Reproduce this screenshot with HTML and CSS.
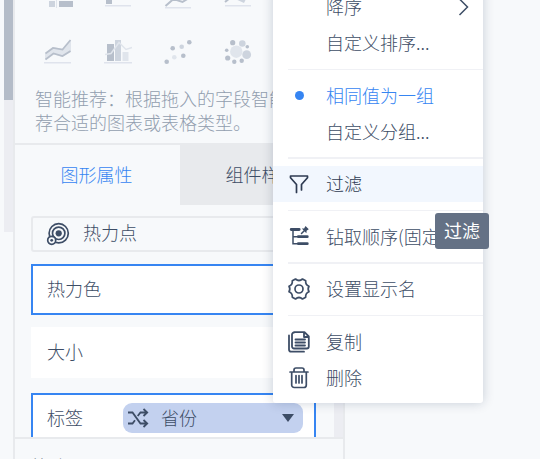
FILE: index.html
```html
<!DOCTYPE html>
<html lang="zh-CN">
<head>
    <meta charset="UTF-8">
    <title>图形属性</title>
    <meta name="viewport" content="width=device-width">
    <link rel="stylesheet" href="styles.css">
</head>
<body>
    <div class="page">
        <div class="side-scroll"><div class="side-thumb"></div></div>
        <div class="panel">
            <div class="charts">
                <div class="chart-grid">
                    <svg viewBox="0 0 30 30"><path fill="#cdd4de" d="M5 18h6v6H5z"/><path fill="#b7bfcb" d="M15 18h14v6H15z"/><path stroke="#e0e5ec" d="M12.500 8v17"/></svg>
                    <svg viewBox="0 0 30 30"><path fill="#b7bfcb" d="M2 12h6v9H2z"/><path fill="#dfe3ec" d="M1 22h26v1.500H1z"/></svg>
                    <svg viewBox="0 0 30 30"><path fill="none" stroke="#b7bfcb" stroke-width="2" d="M1.500 23l8-7 9 3 8-5"/><path fill="#dfe3ec" d="M1 24h26v1.500H1z"/></svg>
                    <svg viewBox="0 0 30 30"><path fill="#cdd4de" d="M9 15l11 5 2-4z"/><path fill="none" stroke="#b7bfcb" stroke-width="2" d="M1 19l5-4"/><path fill="#dfe3ec" d="M1 22h26v1.500H1z"/></svg>
                    <svg viewBox="0 0 30 30"><path fill="#e0e5ec" d="M1 18l8-6 10 2 8-9v12l-9 5-9-3-8 6z"/><path fill="none" stroke="#b7bfcb" stroke-width="1.700" d="M1.500 18.500L9 13l9.500 1.500L26.500 5M1.500 24.500l8-6 9 2.500 8-5"/><path fill="#dfe3ec" d="M0 27h27v1.500H0z"/></svg>
                    <svg viewBox="0 0 30 30"><path fill="#b7bfcb" d="M3 9h7v17H3z"/><path fill="#cdd4de" d="M11 5h6v21h-6z"/><path fill="#e0e5ec" d="M18.500 17h6v9h-6z"/><path fill="none" stroke="#e0e5ec" stroke-width="1.500" d="M1 19.500l6-1 8-11 7 7 6-2"/><path fill="#dfe3ec" d="M0 27h28v1.500H0z"/></svg>
                    <svg viewBox="0 0 30 30"><g fill="#b7bfcb"><circle cx="2.700" cy="26.700" r="2.300"/><circle cx="8.700" cy="13.300" r="2.300"/><circle cx="19.300" cy="20.700" r="2.300"/><circle cx="25.300" cy="7.300" r="2.300"/></g><circle fill="#cdd4de" cx="17.700" cy="11.700" r="2.300"/><circle fill="#e0e5ec" cx="10.300" cy="22.300" r="2.300"/></svg>
                    <svg viewBox="0 0 30 30"><g fill="#b7bfcb"><circle cx="8.700" cy="7.700" r="2.600"/><circle cx="23.300" cy="11.700" r="1.800"/><circle cx="2.700" cy="15.300" r="1.800"/><circle cx="3.700" cy="23" r="2.600"/><circle cx="10.300" cy="26.700" r="2.200"/><circle cx="17.700" cy="25.700" r="2.200"/></g><g fill="#cdd4de"><circle cx="18.300" cy="8.500" r="3.300"/><circle cx="22.700" cy="19.700" r="4.400"/></g><circle fill="#e0e5ec" cx="12.300" cy="16.700" r="6.200"/></svg>
                </div>
                <p class="tip">智能推荐：根据拖入的字段智能推荐合适的图表或表格类型。</p>
            </div>
            <div class="tabs">
                <div class="tab active">图形属性</div>
                <div class="tab">组件样式</div>
            </div>
            <div class="attrs">
                <div class="attr-list">
                    <div class="chart-type">
                        <svg width="24" height="24" viewBox="0 0 24 24" fill="none" stroke="#3d4d66"><circle cx="12.700" cy="11.300" r="9.600" stroke-width="1.700"/><circle cx="12.700" cy="11.300" r="6.200" stroke-width="1.700"/><circle cx="12.700" cy="11.300" r="3.100" fill="#3d4d66" stroke="none"/><circle cx="5.700" cy="18.300" r="4" fill="#f7f9fb" stroke-width="1.700"/><circle cx="5.700" cy="18.300" r="1.400" fill="#3d4d66" stroke="none"/></svg>
                        <span>热力点</span>
                    </div>
                    <div class="attr selected">热力色</div>
                    <div class="attr">大小</div>
                    <div class="attr selected label-attr">
                        <span class="label">标签</span>
                        <div class="field">
                            <svg width="22" height="20" viewBox="0 0 22 20" fill="none" stroke="#3d4d66" stroke-width="1.800"><path d="M1 4.500h4.500l8 11H20M1 15.500h4.500l2.500-3.300M10.700 8l2.800-3.500H20M16.500 1l3.700 3.500L16.500 8M16.500 12l3.700 3.500-3.700 3.500"/></svg>
                            <span>省份</span>
                            <i class="arrow"></i>
                        </div>
                    </div>
                </div>
                <div class="attr-scroll"></div>
            </div>
            <div class="filter">筛选器</div>
        </div>

        <div class="menu">
            <div class="item"><span class="icon"></span><span>降序</span>
                <svg class="more" width="12" height="18" viewBox="0 0 12 18" fill="none" stroke="#3d4d66" stroke-width="1.500"><path d="M1.500 1l8 8-8 8"/></svg>
            </div>
            <div class="item"><span class="icon"></span><span>自定义排序...</span></div>
            <div class="line"></div>
            <div class="item on"><span class="icon"><i class="dot"></i></span><span>相同值为一组</span></div>
            <div class="item"><span class="icon"></span><span>自定义分组...</span></div>
            <div class="line"></div>
            <div class="item hover"><span class="icon">
                <svg width="24" height="24" viewBox="0 0 24 24" fill="none" stroke="#2f3b52" stroke-width="1.700" stroke-linecap="round" stroke-linejoin="round"><path d="M9.500 20.500v-8L3.500 5.700V4h17v1.700l-6 6.800v5.500"/></svg>
            </span><span>过滤</span></div>
            <div class="line"></div>
            <div class="item"><span class="icon">
                <svg width="24" height="24" viewBox="0 0 24 24" fill="none" stroke="#3d4d66" stroke-linecap="round"><path stroke-width="2.800" d="M4.200 4.500h8M11.300 11.700h9M11.300 18.700h9"/><path stroke-width="1.500" d="M6 5v13.700h4M6 11.700h4M14.500 8.500l3-3"/><path fill="#3d4d66" stroke="none" d="M18.500 1l3.300 3.300-1.200.7-1 .8-.2 2.400-4.600-4.600 2.300-.2z"/></svg>
            </span><span>钻取顺序(固定)</span></div>
            <div class="line"></div>
            <div class="item"><span class="icon">
                <svg width="24" height="24" viewBox="0 0 24 24" fill="none" stroke="#3d4d66" stroke-width="1.700" stroke-linejoin="round"><path d="M8.500 2Q12 5 15.500 2L18.700 3.800Q18.300 7.800 22 9.200Q20.300 12 22 14.800Q18.300 16.200 18.700 20.200L15.500 22Q12 19 8.500 22L5.300 20.200Q5.700 16.200 2 14.800Q3.700 12 2 9.200Q5.700 7.800 5.300 3.800Z"/><circle cx="12" cy="12" r="4"/></svg>
            </span><span>设置显示名</span></div>
            <div class="line"></div>
            <div class="item"><span class="icon">
                <svg width="24" height="24" viewBox="0 0 24 24" fill="none" stroke="#3d4d66" stroke-width="1.800" stroke-linecap="round" stroke-linejoin="round"><path d="M7 2.200h10.500l4.300 4.300v10a2 2 0 0 1-2 2H7a2 2 0 0 1-2-2v-12a2 2 0 0 1 2-2zM17 2.500V7h4.500M2 5.500v14a2.200 2.200 0 0 0 2.200 2.200H17M8.500 9.500h9.500M8.500 12.500h9.500M8.500 15.500h9.500"/></svg>
            </span><span>复制</span></div>
            <div class="item"><span class="icon">
                <svg width="24" height="24" viewBox="0 0 24 24" fill="none" stroke="#3d4d66" stroke-width="1.700" stroke-linecap="round" stroke-linejoin="round"><path d="M3 6h18M7 5.500V4a2 2 0 0 1 2-2h6a2 2 0 0 1 2 2v1.500M4.700 6.500V19a2.500 2.500 0 0 0 2.500 2.500h9.600a2.500 2.500 0 0 0 2.500-2.500V6.500M9 9.500v7.500M12 9.500v7.500M15 9.500v7.500"/></svg>
            </span><span>删除</span></div>
        </div>
        <div class="tooltip">过滤</div>
    </div>
</body>
</html>
```

FILE: styles.css
```css
*{
    padding: 0;
    margin: 0;
    box-sizing: border-box;
}
body{
    font: 300 18px/36px "Noto Sans CJK SC", sans-serif;
    color: #3d4d66;
    background-color: #f7f9fb;
}
.page{
    display: flex;
    position: relative;
    width: 540px;
    height: 459px;
    padding-left: 4px;
    overflow: hidden;
}
.side-scroll{
    width: 9px;
    height: 232px;
    background-color: #ecedf2;
}
.side-thumb{
    height: 100px;
    background-color: #b4bcc8;
}
.panel{
    display: flex;
    flex-direction: column;
    width: 332px;
    border: solid #e8eaed;
    border-width: 0 2px;
}

/* chart types */
.charts{
    height: 145px;
    border-bottom: 2px solid #e8eaed;
    overflow: hidden;
}
.chart-grid{
    display: grid;
    grid-template-columns: repeat(4, 60px);
    grid-auto-rows: 30px;
    row-gap: 22px;
    margin-top: -17px;
    padding-left: 29px;
}
.chart-grid svg{
    width: 30px;
    height: 30px;
}
.tip{
    padding: 21px 35px 0 20px;
    line-height: 24px;
    color: #929eaf;
}

.tabs{
    display: flex;
    height: 60px;
    line-height: 58px;
    text-align: center;
}
.tab{
    width: 163px;
    background-color: #e8eaed;
}
.tab.active{
    flex-shrink: 0;
    width: 165px;
    padding-right: 2px;
    color: #3685f2;
    background-color: #f7f9fb;
}

/* attributes */
.attrs{
    display: flex;
    justify-content: space-between;
    height: 232px;
    overflow: hidden;
}
.attr-list{
    width: 301px;
    padding: 11px 0 0 16px;
}
.attr-scroll{
    width: 9px;
    background-color: #ecedf2;
}
.chart-type{
    display: flex;
    align-items: center;
    gap: 13px;
    height: 36px;
    padding-left: 13px;
    border: 2px solid #e8eaed;
    border-radius: 3px;
}
.chart-type span{
    padding-bottom: 4px;
}
.attr{
    height: 51px;
    margin-top: 12px;
    padding: 0 14px;
    line-height: 44px;
    border: 2px solid #fff;
    background-color: #fff;
}
.attr.selected{
    border-color: #3685f2;
}
.label-attr{
    display: flex;
    gap: 40px;
    margin-top: 15px;
    padding-right: 0;
}
.label{
    flex-shrink: 0;
}
.field{
    display: flex;
    align-items: center;
    flex-shrink: 0;
    width: 180px;
    height: 30px;
    margin-top: 8px;
    padding: 0 9px 0 4px;
    line-height: 30px;
    border-radius: 9px;
    background-color: #c3d1ef;
}
.field span{
    margin-left: 12px;
    padding-bottom: 2px;
}
.arrow{
    margin-left: auto;
    border: 6px solid transparent;
    border-top: 8px solid #3d4d66;
    border-bottom: none;
}
.filter{
    height: 22px;
    padding: 9px 16px 0;
    border-top: 2px solid #e8eaed;
    overflow: hidden;
}

/* dropdown over the panel */
.menu{
    position: absolute;
    top: -11px;
    left: 273px;
    width: 210px;
    padding-bottom: 7.5px;
    border-radius: 3px;
    background-color: #fff;
    box-shadow: 0 0 12px rgba(9, 30, 64, 0.2);
}
.item{
    display: flex;
    align-items: center;
    height: 36px;
    padding: 0 13px 0 14px;
    line-height: 34px;
    white-space: nowrap;
}
.item span{
    padding-bottom: 2px;
}
.item .icon{
    display: flex;
    align-items: center;
    justify-content: center;
    flex-shrink: 0;
    width: 24px;
    height: 36px;
    margin-right: 15px;
    padding-bottom: 0;
}
.item.on{
    color: #3685f2;
}
.item.hover{
    color: #2f3b52;
    background-color: #f2f7fe;
}
.dot{
    width: 9px;
    height: 9px;
    border-radius: 50%;
    background-color: #3685f2;
}
.more{
    margin-left: auto;
}
.line{
    height: 1.5px;
    margin: 7.5px 0 7.5px 15px;
    background-color: #f0f1f5;
}
.tooltip{
    position: absolute;
    top: 213px;
    left: 435px;
    width: 54px;
    height: 36px;
    line-height: 34px;
    text-align: center;
    font-weight: 400;
    color: #fff;
    border-radius: 3px;
    background-color: #647185;
}
```
